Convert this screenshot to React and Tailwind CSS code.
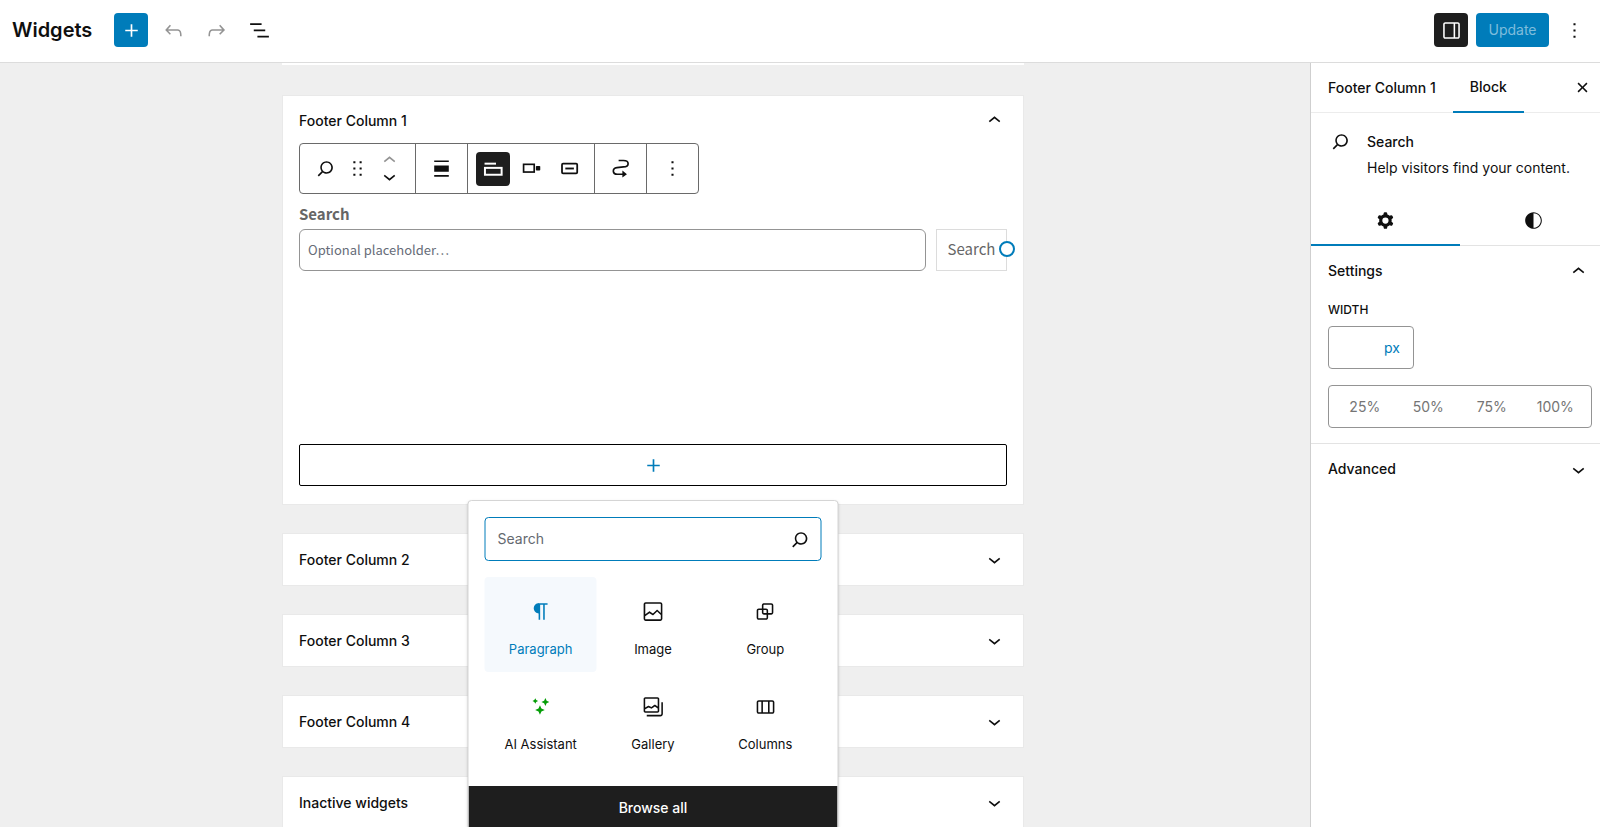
const P = {
  plus: "M18 11.2h-5.2V6h-1.6v5.2H6v1.6h5.2V18h1.6v-5.2H18z",
  undo: "M18.3 11.7c-.6-.6-1.4-.9-2.3-.9H6.7l2.9-3.3-1.1-1-4.5 5L8.5 16l1-1-2.7-2.7H16c.5 0 .9.2 1.3.5 1 1 1 3.4 1 4.5v.3h1.5v-.2c0-1.5 0-4.3-1.5-5.7z",
  redo: "M15.6 6.5l-1.1 1 2.9 3.3H8c-.9 0-1.7.3-2.3.9-1.4 1.5-1.4 4.2-1.4 5.6v.2h1.5v-.3c0-1.1 0-3.5 1-4.5.3-.3.7-.5 1.3-.5h9.2L14.5 15l1.1 1.1 4.6-4.6-4.6-5z",
  listView: "M3 5h11v1.6H3V5zm3.5 6h11v1.6h-11V11zM21 17H10v1.6h11V17z",
  drawer: "M18 4H6c-1.1 0-2 .9-2 2v12c0 1.1.9 2 2 2h12c1.1 0 2-.9 2-2V6c0-1.1-.9-2-2-2zm-4 14.5H6c-.3 0-.5-.2-.5-.5V6c0-.3.2-.5.5-.5h8v13zm4.5-.5c0 .3-.2.5-.5.5h-2.5v-13H18c.3 0 .5.2.5.5v12z",
  more: "M13 19h-2v-2h2v2zm0-6h-2v-2h2v2zm0-6h-2V5h2v2z",
  search: "M13 5c-3.3 0-6 2.7-6 6 0 1.4.5 2.7 1.3 3.7l-3.8 3.8 1.1 1.1 3.8-3.8c1 .8 2.3 1.3 3.7 1.3 3.3 0 6-2.7 6-6S16.3 5 13 5zm0 10.5c-2.5 0-4.5-2-4.5-4.5s2-4.5 4.5-4.5 4.5 2 4.5 4.5-2 4.5-4.5 4.5z",
  close: "M12 13.06l3.712 3.713 1.061-1.06L13.061 12l3.712-3.712-1.06-1.06L12 10.938 8.288 7.227l-1.061 1.06L10.939 12l-3.712 3.712 1.06 1.061L12 13.061z",
  cog: "M10.289 4.836A1 1 0 0111.275 4h1.306a1 1 0 01.987.836l.244 1.466c.787.26 1.503.679 2.108 1.218l1.393-.522a1 1 0 011.216.437l.653 1.13a1 1 0 01-.23 1.273l-1.148.944a6.025 6.025 0 010 2.435l1.149.946a1 1 0 01.23 1.272l-.653 1.13a1 1 0 01-1.216.437l-1.394-.522c-.605.54-1.32.958-2.108 1.218l-.244 1.466a1 1 0 01-.987.836h-1.306a1 1 0 01-.986-.836l-.244-1.466a5.995 5.995 0 01-2.108-1.218l-1.394.522a1 1 0 01-1.217-.436l-.653-1.131a1 1 0 01.23-1.272l1.149-.946a6.026 6.026 0 010-2.435l-1.148-.944a1 1 0 01-.23-1.272l.653-1.131a1 1 0 011.217-.437l1.393.522a5.994 5.994 0 012.108-1.218l.244-1.466zM14.929 12a3 3 0 11-6 0 3 3 0 016 0z",
  styles: "M12 4c-4.4 0-8 3.6-8 8v.1c0 4.1 3.2 7.5 7.2 7.9h.8c4.4 0 8-3.6 8-8s-3.6-8-8-8zm0 15V5c3.9 0 7 3.1 7 7s-3.1 7-7 7z",
  up: "M6.5 12.4L12 8l5.5 4.4-.9 1.2L12 10l-4.5 3.6-1-1.2z",
  down: "M17.5 11.6L12 16l-5.5-4.4.9-1.2L12 14l4.5-3.6 1 1.2z",
  drag: "M8 7h2V5H8v2zm6-2v2h2V5h-2zM8 13h2v-2H8v2zm6 0h2v-2h-2v2zm-6 6h2v-2H8v2zm6 0h2v-2h-2v2z",
  align: "M5 15h14V9H5v6zm0 4.8h14v-1.5H5v1.5zM5 4.2v1.5h14V4.2H5z",
  paragraph: "M18.3 4H9.9v-.1l-.9.2c-2.3.4-4 2.4-4 4.8s1.7 4.4 4 4.8l.7.1V20h1.5V5.5h2.9V20h1.5V5.5h2.7V4z",
  image: "M19 3H5c-1.1 0-2 .9-2 2v14c0 1.1.9 2 2 2h14c1.1 0 2-.9 2-2V5c0-1.1-.9-2-2-2zM5 4.5h14c.3 0 .5.2.5.5v8.4l-3-2.9c-.3-.3-.8-.3-1 0L11.9 14 9 12c-.3-.2-.6-.2-.8 0l-3.6 2.6V5c-.1-.3.1-.5.4-.5zm14 15H5c-.3 0-.5-.2-.5-.5v-2.4l4.1-3 3 1.9c.3.2.7.2.9-.1L16 12l3.5 3.4V19c0 .3-.2.5-.5.5z",
  group: "M18 4h-7c-1.1 0-2 .9-2 2v3H6c-1.1 0-2 .9-2 2v7c0 1.1.9 2 2 2h7c1.1 0 2-.9 2-2v-3h3c1.1 0 2-.9 2-2V6c0-1.1-.9-2-2-2zm-4.5 14c0 .3-.2.5-.5.5H6c-.3 0-.5-.2-.5-.5v-7c0-.3.2-.5.5-.5h3V13c0 1.1.9 2 2 2h2.5v3zm0-4.5H11c-.3 0-.5-.2-.5-.5v-2.5H13c.3 0 .5.2.5.5v2.5zm5-.5c0 .3-.2.5-.5.5h-3V11c0-1.1-.9-2-2-2h-2.5V6c0-.3.2-.5.5-.5h7c.3 0 .5.2.5.5v7z",
  gallery: "M16.375 4.5H4.625a.125.125 0 0 0-.125.125v8.254l2.859-1.54a.75.75 0 0 1 .68-.016l2.384 1.142 2.89-2.074a.75.75 0 0 1 .874 0l2.313 1.66V4.625a.125.125 0 0 0-.125-.125Zm.125 9.398-2.75-1.975-2.813 2.02a.75.75 0 0 1-.76.067l-2.444-1.17L4.5 14.583v1.792c0 .069.056.125.125.125h11.75a.125.125 0 0 0 .125-.125v-2.477ZM4.625 3C3.728 3 3 3.728 3 4.625v11.75C3 17.273 3.728 18 4.625 18h11.75c.898 0 1.625-.727 1.625-1.625V4.625C18 3.728 17.273 3 16.375 3H4.625ZM20 8v11c0 .69-.31 1-.999 1H6v1.5h13.001c1.52 0 2.499-.982 2.499-2.5V8H20Z",
  columns: "M19 6H6c-1.1 0-2 .9-2 2v9c0 1.1.9 2 2 2h13c1.1 0 2-.9 2-2V8c0-1.1-.9-2-2-2zm-4.1 1.5v10H10v-10h4.9zM5.5 17V8c0-.3.2-.5.5-.5h2.5v10H6c-.3 0-.5-.2-.5-.5zm14 0c0 .3-.2.5-.5.5h-2.6v-10H19c.3 0 .5.2.5.5v9z",
  sparkles: "M6.5 4l.9 1.8 1.8.9-1.8.9-.9 1.8-.9-1.8-1.8-.9 1.8-.9zM16.2 3.9l1.2 2.6 2.6 1.2-2.6 1.2-1.2 2.6-1.2-2.6-2.6-1.2 2.6-1.2zM11 10.7l1.4 3.2 3.2 1.4-3.2 1.4-1.4 3.2-1.4-3.2-3.2-1.4 3.2-1.4z",
};

function Icon({ name, className = "", children }) {
  return (
    <svg viewBox="0 0 24 24" aria-hidden="true" fill="currentColor" className={`size-[25px] shrink-0 ${className}`}>
      {name ? <path fillRule="evenodd" clipRule="evenodd" d={P[name]} /> : children}
    </svg>
  );
}

const LabelIcon = () => (
  <Icon>
    <rect x="3.4" y="6.4" width="11" height="1.9" />
    <rect x="3.8" y="11.4" width="16" height="6.6" fill="none" stroke="currentColor" strokeWidth="1.9" />
  </Icon>
);
const OutsideIcon = () => (
  <Icon>
    <rect x="4.4" y="8" width="10.2" height="7.4" fill="none" stroke="currentColor" strokeWidth="1.6" />
    <rect x="16.2" y="9.6" width="4.2" height="4.4" rx=".8" />
  </Icon>
);
const InsideIcon = () => (
  <Icon>
    <rect x="4.8" y="7.4" width="14.6" height="9.2" rx="1" fill="none" stroke="currentColor" strokeWidth="1.7" />
    <rect x="8" y="11.1" width="8.2" height="1.8" />
  </Icon>
);
const CurveIcon = () => (
  <Icon>
    <path d="M10.2 4.3h4.6c6 0 6 6 0 6.2l-6.2.6c-4.8.6-4.6 6.3.4 6.4h5.5" fill="none" stroke="currentColor" strokeWidth="1.6" />
    <path d="M13.8 14l4.4 3.4-4.4 3.2z" />
  </Icon>
);

function Area({ title }) {
  return (
    <section className="border border-[#e9e9e9] bg-white">
      <h2>
        <button className="flex h-[51px] w-full items-center justify-between px-4 text-sm font-medium">
          {title}
          <Icon name="down" />
        </button>
      </h2>
    </section>
  );
}

function Block({ icon, label, active, green }) {
  return (
    <button
      className={`flex h-[95px] flex-col items-center gap-[15px] rounded-sm pt-[22px] text-[13px] ${active ? "bg-[#f5f9fd] text-[#007cba]" : ""}`}
    >
      <Icon name={icon} className={green ? "text-[#069e08]" : ""} />
      <span className="leading-5">{label}</span>
    </button>
  );
}

function Inserter() {
  return (
    <div className="absolute top-full left-1/2 z-10 mt-3.5 w-[371px] -translate-x-1/2 overflow-hidden rounded-sm border border-[#d5d5d5] bg-white shadow-sm">
      <div className="px-4 pt-4 pb-[19px]">
        <label className="flex h-11 items-center rounded-sm border border-[#007cba] pr-2 pl-3">
          <input type="search" aria-label="Search for blocks" placeholder="Search" className="min-w-0 flex-1 text-sm outline-none placeholder:text-[#646970]" />
          <Icon name="search" />
        </label>
        <div className="mt-4 grid grid-cols-3">
          <Block icon="paragraph" label="Paragraph" active />
          <Block icon="image" label="Image" />
          <Block icon="group" label="Group" />
          <Block icon="sparkles" label="AI Assistant" green />
          <Block icon="gallery" label="Gallery" />
          <Block icon="columns" label="Columns" />
        </div>
      </div>
      <button className="h-[43px] w-full bg-[#1e1e1e] text-sm font-medium text-white">Browse all</button>
    </div>
  );
}

function Toolbar() {
  const group = "flex h-full items-center border-r border-[#6a6a6a] last:border-r-0";
  return (
    <div role="toolbar" aria-label="Block tools" className="flex h-[51px] w-fit items-center rounded-sm border border-[#6a6a6a]">
      <div className={`${group} px-[13px]`}>
        <button aria-label="Search block"><Icon name="search" /></button>
        <button aria-label="Drag" className="ml-[7px]"><Icon name="drag" /></button>
        <div className="ml-[7px] flex flex-col">
          <button aria-label="Move up" className="flex h-4 items-center text-[#949494]"><Icon name="up" /></button>
          <button aria-label="Move down" className="flex h-4 items-center"><Icon name="down" /></button>
        </div>
      </div>
      <div className={`${group} px-[13px]`}>
        <button aria-label="Align"><Icon name="align" /></button>
      </div>
      <div className={`${group} pr-3 pl-2`}>
        <button aria-label="Toggle search label" aria-pressed="true" className="flex size-[34px] items-center justify-center rounded-sm bg-[#1e1e1e] text-white"><LabelIcon /></button>
        <button aria-label="Button position" className="ml-[9px]"><OutsideIcon /></button>
        <button aria-label="Use button with icon" className="ml-[13px]"><InsideIcon /></button>
      </div>
      <div className={`${group} px-[13px]`}>
        <button aria-label="Transform"><CurveIcon /></button>
      </div>
      <div className={`${group} px-[13px]`}>
        <button aria-label="Options"><Icon name="more" /></button>
      </div>
    </div>
  );
}

function Header() {
  return (
    <header className="flex h-[63px] shrink-0 items-center justify-between border-b border-[#dcdcdc] bg-white pr-[13px] pb-0.5 pl-3">
      <div className="flex items-center">
        <h1 className="text-xl font-semibold">Widgets</h1>
        <button aria-label="Add block" className="ml-[22px] flex size-[34px] items-center justify-center rounded-sm bg-[#007cba] text-white"><Icon name="plus" /></button>
        <button aria-label="Undo" className="ml-[13px] text-[#949494]"><Icon name="undo" /></button>
        <button aria-label="Redo" className="ml-[18px] text-[#949494]"><Icon name="redo" /></button>
        <button aria-label="List view" className="ml-[18px]"><Icon name="listView" /></button>
      </div>
      <div className="flex items-center">
        <button aria-label="Settings" className="flex size-[34px] items-center justify-center rounded-sm bg-[#1e1e1e] text-white"><Icon name="drawer" /></button>
        <button className="ml-2 h-[34px] w-[73px] rounded-sm bg-[#007cba] text-sm text-[#7fbddc]">Update</button>
        <button aria-label="More options" className="ml-[13px]"><Icon name="more" /></button>
      </div>
    </header>
  );
}

function Sidebar() {
  return (
    <aside className="w-[290px] shrink-0 overflow-hidden border-l border-[#cfcfcf] bg-white">
      <div className="flex h-[50px] items-stretch border-b border-[#ececec] text-sm font-medium">
        <button className="px-[17px]">Footer Column 1</button>
        <button className="-mb-px border-b-2 border-[#007cba] px-[17px]">Block</button>
        <button aria-label="Close settings" className="mr-[5px] ml-auto"><Icon name="close" /></button>
      </div>
      <div className="flex gap-3.5 px-[17px] pt-4">
        <Icon name="search" />
        <div>
          <h2 className="text-sm leading-[25px] font-medium">Search</h2>
          <p className="text-sm leading-7">Help visitors find your content.</p>
        </div>
      </div>
      <div className="mt-[13px] -mr-2 grid h-[51px] grid-cols-2 border-b border-[#e3e3e3]">
        <button aria-label="Settings" className="-mb-px flex items-center justify-center border-b-2 border-[#007cba] pt-0.5"><Icon name="cog" /></button>
        <button aria-label="Styles" className="flex items-center justify-center"><Icon name="styles" /></button>
      </div>
      <section className="border-b border-[#e3e3e3] pb-[15px] pl-[17px]">
        <h2>
          <button className="flex h-[50px] w-full items-center justify-between pr-[9px] text-sm font-medium">
            Settings
            <Icon name="up" />
          </button>
        </h2>
        <label htmlFor="width" className="mt-1 block text-xs leading-5 font-medium">WIDTH</label>
        <div className="mt-1.5 flex h-[43px] w-[86px] items-center rounded-sm border border-[#949494] pr-[13px]">
          <input id="width" type="text" className="min-w-0 flex-1 pl-3 text-sm outline-none" />
          <button className="text-sm text-[#007cba]">px</button>
        </div>
        <div role="group" aria-label="Percentage width" className="mt-4 mr-2 grid h-[43px] grid-cols-4 rounded-sm border border-[#949494] px-1 text-sm text-[#757575]">
          <button>25%</button>
          <button>50%</button>
          <button>75%</button>
          <button>100%</button>
        </div>
      </section>
      <h2>
        <button className="flex h-[50px] w-full items-center justify-between pr-[9px] pl-[17px] text-sm font-medium">
          Advanced
          <Icon name="down" />
        </button>
      </h2>
    </aside>
  );
}

export default function App() {
  return (
    <div className="flex h-screen flex-col overflow-hidden bg-[#efefef] font-['Inter',sans-serif] text-[#0f0f0f]">
      <Header />
      <div className="flex min-h-0 flex-1">
        <main className="min-w-0 flex-1 overflow-hidden pr-[286px] pl-[282px]">
          <div className="h-[2px] bg-white" />
          <div className="mt-[30px] flex flex-col gap-7">
            <section className="border border-[#e9e9e9] bg-white px-4 pb-[18px]">
              <h2>
                <button className="flex h-[47px] w-full items-center justify-between pt-0.5 text-sm font-medium">
                  Footer Column 1
                  <Icon name="up" />
                </button>
              </h2>
              <Toolbar />
              <div className="font-['Noto_Sans_CJK_SC','Noto_Sans',sans-serif]">
                <label htmlFor="placeholder" className="mt-2 block text-[15px] leading-6 font-bold text-[#666]">Search</label>
                <div className="mt-[3px] flex gap-2.5">
                  <input id="placeholder" type="text" placeholder="Optional placeholder…" className="h-[42px] min-w-0 flex-1 rounded-md border border-[#949494] px-2 pb-0.5 text-[13px] outline-none placeholder:text-[#666c78]" />
                  <div className="relative">
                    <button className="h-[42px] w-[71px] border border-[#dcdcdc] pb-0.5 text-[15px] text-[#666]">Search</button>
                    <span className="absolute top-3 -right-2 size-4 rounded-full border-2 border-[#007cba] bg-white" />
                  </div>
                </div>
              </div>
              <div className="relative mt-[173px]">
                <button aria-label="Add block" className="flex h-[42px] w-full items-center justify-center rounded-xs border border-black text-[#007cba]">
                  <Icon name="plus" />
                </button>
                <Inserter />
              </div>
            </section>
            <Area title="Footer Column 2" />
            <Area title="Footer Column 3" />
            <Area title="Footer Column 4" />
            <Area title="Inactive widgets" />
          </div>
        </main>
        <Sidebar />
      </div>
    </div>
  );
}
